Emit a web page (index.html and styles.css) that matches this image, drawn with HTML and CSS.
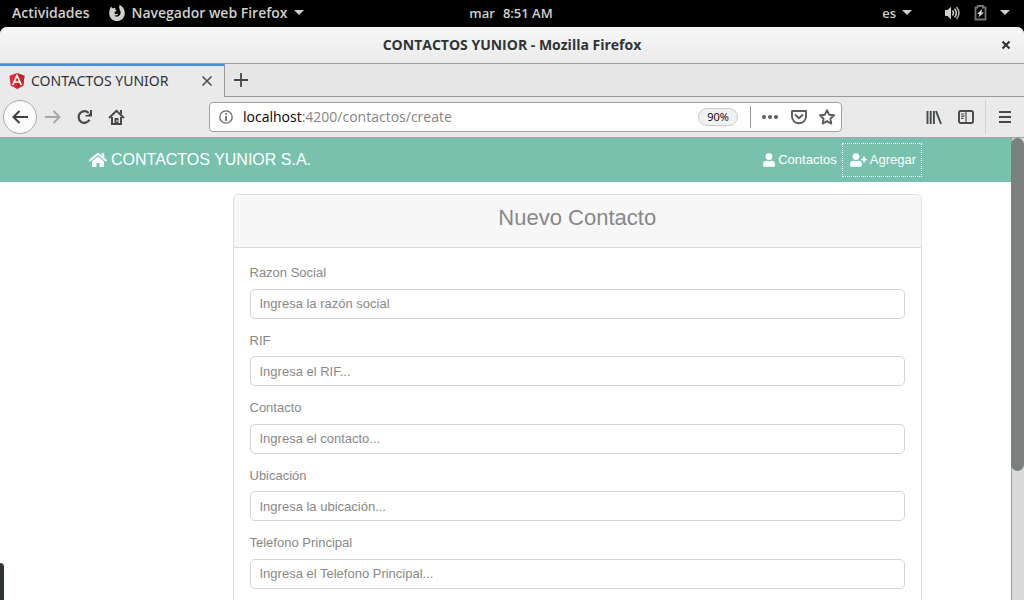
FILE: index.html
```html
<!DOCTYPE html>
<html lang="es">
<head>
<meta charset="utf-8">
<title>CONTACTOS YUNIOR</title>
<link rel="stylesheet" href="styles.css">
</head>
<body class="desktop">
<header class="shell">
  <div class="shell-side">
    <button class="shell-btn">Actividades</button>
    <button class="shell-btn app-btn">
      <svg width="16" height="16" viewBox="0 0 16 16"><path fill="#d0d0cc" d="M2.300 1.200C2.400 2.600 3 3.200 4.400 3.200L6.400 2.700 6 4.300 7.600 5.200 7 6.200 5.600 7C5.500 8.800 6.400 9.400 7.400 9.200L9.400 8.500C9 10.600 6.800 11 5.200 10.200 6.200 12 9.200 12.200 10.700 10.300 12.200 8.400 11.700 5.700 10.200 4.600L11 4.700C9.900 3.200 9.900 1.600 10.800 0 14 1.700 16 4.600 15.800 8.400 15.600 12.800 12.200 16 8 16 3.600 16 .2 12.600.2 8.200.2 5.300 1 3 2.300 1.200Z"/></svg>
      <span>Navegador web Firefox</span><i class="caret"></i>
    </button>
  </div>
  <button class="shell-btn clock"><span>mar</span><span>8:51 AM</span></button>
  <div class="shell-side shell-right">
    <button class="shell-btn lang">es<i class="caret"></i></button>
    <button class="shell-btn status" aria-label="Sistema">
      <svg width="16" height="16" viewBox="0 0 16 16"><path fill="#d0d0cc" d="M1 5h2.500L7 1.800v12.400L3.500 11H1z"/><g fill="none" stroke="#d0d0cc" stroke-width="1.500"><path d="M8.500 5.500q2 2.500 0 5"/><path d="M10.500 3.600q3.600 4.400 0 8.800"/><path d="M12.500 2q5 6 0 12" stroke="#aaa"/></g></svg>
      <svg width="16" height="16" viewBox="0 0 16 16"><path fill="none" stroke="#777" stroke-width="1.800" d="M6 2.500V1h5v1.500h2.500v12h-10v-12H6"/><path fill="#e0e0dc" d="M10.500 3.800 5 9h2.600l-1.400 3.500L12 7.500H9.200z"/></svg>
      <i class="caret"></i>
    </button>
  </div>
</header>
<main class="window">
  <div class="titlebar">
    <span class="window-title">CONTACTOS YUNIOR - Mozilla Firefox</span>
    <button class="window-close" aria-label="Cerrar"><svg width="10" height="10" viewBox="0 0 10 10"><path d="m1.500 1.500 7 7m0-7-7 7" stroke="#2e3436" stroke-width="2.200"/></svg></button>
  </div>
  <div class="tabs">
    <div class="tab">
      <svg width="16" height="16" viewBox="0 0 16 16"><path fill="#dd2c35" d="M8 0 15.500 2.700 14.300 12.600 8 16 1.700 12.600.5 2.700z"/><path fill="#b52b30" d="M8 0 15.500 2.700 14.300 12.600 8 16z"/><path fill="none" stroke="#fff" stroke-width="1.700" d="m3.700 12 4.300-9.500L12.300 12M5.500 9h5"/></svg>
      <span class="tab-title">CONTACTOS YUNIOR</span>
      <button class="plain" aria-label="Cerrar pestaña"><svg width="12" height="12" viewBox="0 0 12 12"><path d="m1.500 1.500 9 9m0-9-9 9" stroke="#4a4f50" stroke-width="1.600"/></svg></button>
    </div>
    <div class="tab-rest"><button class="plain" aria-label="Nueva pestaña"><svg width="16" height="16" viewBox="0 0 16 16"><path d="M8 1v14M1 8h14" stroke="#45494a" stroke-width="1.800"/></svg></button></div>
  </div>
  <div class="toolbar">
    <div class="nav-tools">
      <button class="back" aria-label="Atrás"><svg width="18" height="16" viewBox="0 0 18 16"><path d="M17 8H2.500m6-6-6 6 6 6" fill="none" stroke="#3b4042" stroke-width="2"/></svg></button>
      <button class="plain" aria-label="Adelante"><svg width="18" height="16" viewBox="0 0 18 16"><path d="M1 8h14.500m-6-6 6 6-6 6" fill="none" stroke="#a7a9a9" stroke-width="2"/></svg></button>
      <button class="plain" aria-label="Recargar"><svg width="18" height="16" viewBox="0 0 18 16"><path d="M13.500 10.800A5.800 5.800 0 1 1 12.600 4" fill="none" stroke="#45494a" stroke-width="2.200"/><path d="M16 1v6.500H9.500V6H12l2-2V1z" fill="#45494a"/></svg></button>
      <button class="plain" aria-label="Inicio"><svg width="18" height="16" viewBox="0 0 18 16"><path d="M1 9 8.500 1.800 16 9M4 8v7h9V8" fill="none" stroke="#45494a" stroke-width="2"/><path fill="#45494a" d="M6.500 9h4v6h-4zM12 1h2v5l-2-2z"/><path fill="#eaeaea" d="M8.500 11h1v2h-1z"/></svg></button>
    </div>
    <div class="urlbar">
      <svg width="14" height="14" viewBox="0 0 14 14"><circle cx="7" cy="7" r="6.200" fill="none" stroke="#666" stroke-width="1.300"/><path d="M7 6v5M7 3v1.700" stroke="#555" stroke-width="1.600"/></svg>
      <span class="url"><b>localhost</b>:4200/contactos/create</span>
      <button class="zoom">90%</button>
      <i class="rule"></i>
      <button class="plain" aria-label="Acciones"><svg width="18" height="16" viewBox="0 0 18 16"><g fill="#5a5d5e"><circle cx="3" cy="8" r="2"/><circle cx="9" cy="8" r="2"/><circle cx="15" cy="8" r="2"/></g></svg></button>
      <button class="plain" aria-label="Pocket"><svg width="16" height="16" viewBox="0 0 16 16"><path d="M1 2h14v5.500a7 6.800 0 0 1-14 0zM4.500 6 8 9.300 11.500 6" fill="none" stroke="#5a5d5e" stroke-width="1.900" stroke-linejoin="round" stroke-linecap="round"/></svg></button>
      <button class="plain" aria-label="Marcador"><svg width="16" height="16" viewBox="0 0 16 16"><path d="m8 1.200 2.100 4.500 4.900.6-3.600 3.400.9 4.900L8 12.200l-4.300 2.400.9-4.900L1 6.300l4.900-.6z" fill="none" stroke="#5a5d5e" stroke-width="1.900" stroke-linejoin="round"/></svg></button>
    </div>
    <div class="end-tools">
      <button class="plain" aria-label="Biblioteca"><svg width="16" height="16" viewBox="0 0 16 16"><path d="M1.500 2v13M4.700 2v13M7.900 2v13M10 2l5 13" stroke="#45494a" stroke-width="1.900"/></svg></button>
      <button class="plain" aria-label="Barra lateral"><svg width="16" height="16" viewBox="0 0 16 16"><rect x="1" y="2" width="14" height="12" rx="1.800" fill="none" stroke="#45494a" stroke-width="1.900"/><path d="M8 2v12M3 5h3.500M3 7.200h3.500M3 9.400h2.500" stroke="#45494a" stroke-width="1.200"/></svg></button>
      <button class="plain menu" aria-label="Menú"><svg width="14" height="16" viewBox="0 0 14 16"><path d="M1 3h12M1 8h12M1 13h12" stroke="#45494a" stroke-width="2"/></svg></button>
    </div>
  </div>
  <div class="viewport">
    <div class="page">
      <nav class="navbar"><div class="container bar">
        <a class="brand" href="#"><svg width="18" height="16" viewBox="0 0 576 512"><path fill="#fff" d="M280.400 148.300 96 300.100V464a16 16 0 0 0 16 16l112-.3a16 16 0 0 0 16-16V368a16 16 0 0 1 16-16h64a16 16 0 0 1 16 16v95.600a16 16 0 0 0 16 16l112 .4a16 16 0 0 0 16-16V300L295.700 148.300a12 12 0 0 0-15.300 0zM571.600 251.500 488 182.600V44a12 12 0 0 0-12-12h-56a12 12 0 0 0-12 12v72.600L318.500 43a48 48 0 0 0-61 0L4.300 251.500a12 12 0 0 0-1.600 16.900l25.500 31a12 12 0 0 0 16.900 1.600L280.400 107.200a12 12 0 0 1 15.300 0L530.900 301a12 12 0 0 0 16.900-1.600l25.500-31a12 12 0 0 0-1.700-16.900z"/></svg>CONTACTOS YUNIOR S.A.</a>
        <div class="links">
          <a class="link" href="#"><svg width="12" height="14" viewBox="0 0 448 512"><path fill="#fff" d="M224 256a128 128 0 1 0 0-256 128 128 0 0 0 0 256zm90 32h-17a174 174 0 0 1-146 0h-17A134 134 0 0 0 0 422v42a48 48 0 0 0 48 48h352a48 48 0 0 0 48-48v-42a134 134 0 0 0-134-134z"/></svg>Contactos</a>
          <a class="link focused" href="#"><svg width="17" height="14" viewBox="0 0 640 512"><path fill="#fff" d="M624 208h-64v-64a16 16 0 0 0-16-16h-32a16 16 0 0 0-16 16v64h-64a16 16 0 0 0-16 16v32a16 16 0 0 0 16 16h64v64a16 16 0 0 0 16 16h32a16 16 0 0 0 16-16v-64h64a16 16 0 0 0 16-16v-32a16 16 0 0 0-16-16zM224 256a128 128 0 1 0 0-256 128 128 0 0 0 0 256zm90 32h-17a174 174 0 0 1-146 0h-17A134 134 0 0 0 0 422v42a48 48 0 0 0 48 48h352a48 48 0 0 0 48-48v-42a134 134 0 0 0-134-134z"/></svg>Agregar</a>
        </div>
      </div></nav>
      <div class="container">
        <section class="card">
          <div class="card-header"><h1 class="card-title">Nuevo Contacto</h1></div>
          <form class="card-body">
            <div class="group"><label for="razon">Razon Social</label><input class="field" id="razon" type="text" placeholder="Ingresa la razón social"></div>
            <div class="group"><label for="rif">RIF</label><input class="field" id="rif" type="text" placeholder="Ingresa el RIF..."></div>
            <div class="group"><label for="contacto">Contacto</label><input class="field" id="contacto" type="text" placeholder="Ingresa el contacto..."></div>
            <div class="group"><label for="ubicacion">Ubicación</label><input class="field" id="ubicacion" type="text" placeholder="Ingresa la ubicación..."></div>
            <div class="group"><label for="telefono">Telefono Principal</label><input class="field" id="telefono" type="text" placeholder="Ingresa el Telefono Principal..."></div>
          </form>
        </section>
      </div>
    </div>
    <div class="scrollbar"><div class="thumb"></div></div>
  </div>
</main>
<div class="tray"></div>
</body>
</html>
```
FILE: styles.css
```css
* { box-sizing: border-box; }
.desktop {
  margin: 0; height: 100vh; overflow: hidden; position: relative;
  display: flex; flex-direction: column; background: #000;
  font: 14px/20px "Open Sans", "Noto Sans", sans-serif; color: #2e3436;
}
button { font: inherit; color: inherit; border: 0; padding: 0; background: none; }
svg { display: block; flex: none; }

.shell { display: flex; align-items: center; height: 27px; padding: 0 12px 2px; background: #000; color: #d0d0cc; font-weight: 600; }
.shell-side { flex: 1; display: flex; gap: 20px; }
.shell-right { justify-content: flex-end; gap: 32px; padding-right: 2px; }
.shell-btn { display: flex; align-items: center; white-space: nowrap; }
.app-btn { gap: 6px; }
.clock { gap: 8px; font-size: 13px; }
.lang { gap: 6px; font-size: 13px; }
.status { gap: 12px; }
.caret { border: 5px solid transparent; border-top-color: #d0d0cc; border-bottom: 0; }

.window { flex: 1; min-height: 0; display: flex; flex-direction: column; background: #eaeaea; border-radius: 7px 7px 0 0; overflow: hidden; }
.titlebar { display: grid; grid-template-columns: 1fr auto 1fr; align-items: center; height: 37px; padding: 0 13px; background: linear-gradient(#f7f7f7, #ebebeb); border-bottom: 1px solid #a0a0a0; }
.window-title { grid-column: 2; font-weight: 700; }
.window-close { grid-column: 3; justify-self: end; }

.tabs { display: flex; height: 33px; }
.tab { display: flex; align-items: center; gap: 6px; width: 225px; padding: 0 11px 1px 9px; border-top: 2px solid #4a90d9; border-right: 1px solid #9a9a9a; }
.tab-title { flex: 1; white-space: nowrap; font-family: "Noto Sans", "Open Sans", sans-serif; }
.tab-rest { flex: 1; display: flex; align-items: center; padding-left: 8px; background: #e6e6e6; border-bottom: 1px solid #9a9a9a; }

.toolbar { display: flex; align-items: center; justify-content: space-between; height: 41px; border-bottom: 1px solid #a5a5a5; }
.nav-tools { display: flex; align-items: center; gap: 14px; width: 209px; padding-left: 3px; }
.back { display: grid; place-items: center; width: 34px; height: 34px; margin-right: -7px; border: 1px solid #a9a9a9; border-radius: 50%; background: #fbfbfb; }
.urlbar { flex: 1; display: flex; align-items: center; gap: 12px; height: 30px; padding: 0 6px 0 9px; background: #fff; border: 1px solid #a0a0a0; border-radius: 4px; }
.url { flex: 1; margin-left: -2px; color: #858585; }
.url b { color: #000; font-weight: 400; }
.zoom { width: 40px; height: 18px; border: 1px solid #ccc; border-radius: 9px; background: #f1f1f1; color: #000; font-size: 11px; line-height: 16px; }
.rule { width: 1px; height: 22px; margin-right: -2px; background: #999; }
.end-tools { display: flex; align-items: center; gap: 16px; width: 182px; justify-content: flex-end; padding-right: 12px; }
.menu { display: flex; align-items: center; height: 34px; padding-left: 12px; margin-left: -5px; border-left: 1px solid #d2d2d2; }

.viewport { flex: 1; min-height: 0; display: flex; background: #fff; }
.page { flex: 1; overflow: hidden; font-family: "Liberation Sans", Arial, sans-serif; font-size: 13px; line-height: 1.5; color: #888; }
.container { max-width: 861px; margin: 0 auto; padding: 0 14px; }
.navbar { background: #78c2ad; margin-bottom: 12px; }
.bar { display: flex; align-items: center; justify-content: space-between; height: 44px; }
.brand, .link { display: flex; align-items: center; color: #fff; text-decoration: none; }
.brand { gap: 4px; font-size: 16px; }
.links { display: flex; }
.link { gap: 3px; height: 34px; padding: 0 5px; }
.focused { outline: 1px dotted #fff; outline-offset: -1px; padding: 0 6px 0 8px; }
.card { width: calc((100% + 28px) * 10 / 12 - 28px); margin-left: auto; border: 1px solid #dfdfdf; border-radius: 5px; background: #fff; }
.card-header { padding: 10px 16px 16px; background: #f7f7f7; border-bottom: 1px solid #dadada; border-radius: 4px 4px 0 0; text-align: center; }
.card-title { margin: 0; font-size: 22px; line-height: 26px; font-weight: 400; }
.card-body { padding: 15px 16px; }
.group { margin-bottom: 12px; }
.group label { display: block; margin-bottom: 6px; }
.field { display: block; width: 100%; height: 30px; padding: 0 9px; border: 1px solid #ced4da; border-radius: 5px; font: inherit; color: #495057; }
.field::placeholder { color: #888; opacity: 1; }
.scrollbar { width: 13px; background: #dadada; border-left: 1px solid #a0a0a0; }
.thumb { height: 72%; margin-left: -1px; border-radius: 7px; background: #7b7f7e; }
.tray { position: absolute; left: 0; bottom: 0; width: 4px; height: 37px; background: #2e3436; border-top-right-radius: 4px; }
```
